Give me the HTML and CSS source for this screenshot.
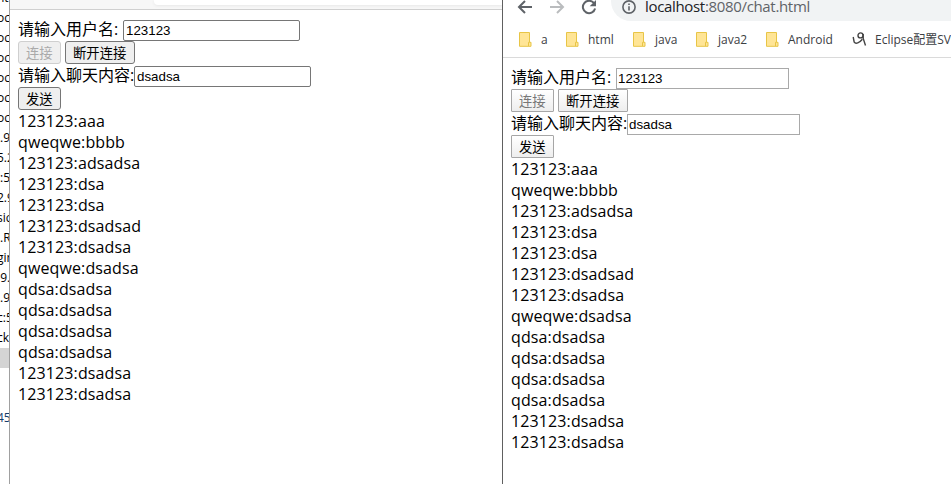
FILE: index.html
```html
<!DOCTYPE html>
<html lang="zh">
<head>
<meta charset="utf-8">
<title>chat</title>
<link rel="stylesheet" href="styles.css">
</head>
<body>
<div class="desktop">
  <aside class="tree">
    <div>nt</div><div>oc</div><div>oc</div><div>oc</div><div>oc</div><div>oc</div><div>oc</div>
    <div class="in">.9</div><div>5.2</div><div class="in">:5</div><div>2.9</div><div>sic</div><div class="in">.R</div><div>gin</div><div>.9.</div><div class="in">.9</div><div>c:5</div><div>cke</div>
    <div class="selected"></div><div></div><div></div><div class="number">45</div>
  </aside>
  <section class="window left">
    <header class="strip"><div class="strip-field"></div></header>
    <main class="page">
      <div class="row"><span class="label">请输入用户名:</span><input class="name" value="123123"></div>
      <div class="row"><button disabled>连接</button><button>断开连接</button></div>
      <div class="row"><span class="label">请输入聊天内容:</span><input value="dsadsa"></div>
      <div class="row"><button>发送</button></div>
      <div class="messages">
        <div>123123:aaa</div><div>qweqwe:bbbb</div><div>123123:adsadsa</div><div>123123:dsa</div><div>123123:dsa</div><div>123123:dsadsad</div><div>123123:dsadsa</div><div>qweqwe:dsadsa</div><div>qdsa:dsadsa</div><div>qdsa:dsadsa</div><div>qdsa:dsadsa</div><div>qdsa:dsadsa</div><div>123123:dsadsa</div><div>123123:dsadsa</div>
      </div>
    </main>
  </section>
  <section class="window right">
    <header class="chrome">
      <div class="toolbar">
        <svg class="nav" viewBox="0 0 16 16"><path d="M15 8H2M8 2L2 8l6 6"/></svg>
        <svg class="nav dim" viewBox="0 0 16 16"><path d="M1 8h13M8 2l6 6-6 6"/></svg>
        <svg class="nav" viewBox="0 0 16 16"><path d="M13 4.2A6.2 6.2 0 1 0 14.1 9.5"/><path class="solid" d="M15 1v6.3H8.7z"/></svg>
        <div class="address">
          <svg class="info" viewBox="0 0 14 14"><circle cx="7" cy="7" r="6.1"/><path d="M7 6.2v4.2M7 3.4v1.6"/></svg>
          <span class="url"><b>localhost</b>:8080/chat.html</span>
        </div>
      </div>
      <nav class="bookmarks">
        <a class="b-a"><svg class="folder" viewBox="0 0 13 15"><path d="M.5.5h10v9.8h1.5v4H.5zM9.5 14v-3.7h1"/></svg><span>a</span></a>
        <a class="b-html"><svg class="folder" viewBox="0 0 13 15"><path d="M.5.5h10v9.8h1.5v4H.5zM9.5 14v-3.7h1"/></svg><span>html</span></a>
        <a class="b-java"><svg class="folder" viewBox="0 0 13 15"><path d="M.5.5h10v9.8h1.5v4H.5zM9.5 14v-3.7h1"/></svg><span>java</span></a>
        <a class="b-java2"><svg class="folder" viewBox="0 0 13 15"><path d="M.5.5h10v9.8h1.5v4H.5zM9.5 14v-3.7h1"/></svg><span>java2</span></a>
        <a class="b-android"><svg class="folder" viewBox="0 0 13 15"><path d="M.5.5h10v9.8h1.5v4H.5zM9.5 14v-3.7h1"/></svg><span>Android</span></a>
        <a class="b-eclipse"><svg class="site" viewBox="0 0 15 15"><path d="M1.200 5l1 5.200c1.600 2.200 5.200.6 8.200-3"/><circle cx="8.500" cy="3.400" r="2.500"/><path d="M11.200 2v4.500l2.300 7"/></svg><span>Eclipse配置SV</span></a>
      </nav>
    </header>
    <main class="page">
      <div class="row"><span class="label">请输入用户名:</span><input class="name" value="123123"></div>
      <div class="row"><button disabled>连接</button><button>断开连接</button></div>
      <div class="row"><span class="label">请输入聊天内容:</span><input value="dsadsa"></div>
      <div class="row"><button>发送</button></div>
      <div class="messages">
        <div>123123:aaa</div><div>qweqwe:bbbb</div><div>123123:adsadsa</div><div>123123:dsa</div><div>123123:dsa</div><div>123123:dsadsad</div><div>123123:dsadsa</div><div>qweqwe:dsadsa</div><div>qdsa:dsadsa</div><div>qdsa:dsadsa</div><div>qdsa:dsadsa</div><div>qdsa:dsadsa</div><div>123123:dsadsa</div><div>123123:dsadsa</div>
      </div>
    </main>
  </section>
</div>
</body>
</html>
```
FILE: styles.css
```css
* { box-sizing: border-box; }
body { margin: 0; background: #fff; color: #000; font-family: "Open Sans", "Noto Sans CJK SC", sans-serif; }
.desktop { display: grid; grid-template-columns: 9px 493px 449px; width: 951px; height: 484px; overflow: hidden; }
.tree { overflow: hidden; margin-top: -12px; font-size: 12px; line-height: 20px; }
.tree div { height: 20px; white-space: nowrap; overflow: hidden; text-indent: -3px; }
.tree .in { text-indent: 0; }
.tree .selected { background: #d4d4d4; }
.tree .number { color: #123c69; }
.window { overflow: hidden; background: #fff; }
.left { border-left: 1px solid #a0a0a0; }
.right { border-left: 1px solid #606060; }
.strip { height: 10px; background: #f7f7f7; border-bottom: 1px solid #d0d0d0; padding-left: 144px; }
.strip-field { height: 5px; background: #fff; border-radius: 0 0 0 4px; box-shadow: 0 1px 3px #e8e8e8; }
.page { padding: 8px 8px 0; }
.row { display: flex; align-items: flex-end; height: 23px; }
.label { width: 116px; font-size: 16px; line-height: 23px; white-space: nowrap; }
.row:first-child .label { width: 105px; }
input { width: 177px; height: 21px; margin: 0; padding: 1px 2px; border: 1px solid #767676; border-radius: 2px; background: #fff; color: #000; font: 13.333px "Liberation Sans", sans-serif; }
button { height: 23px; margin: 0 4px 0 0; padding: 0 7px; border: 1px solid #767676; border-radius: 3px; background: #efefef; color: #000; font: 13.333px/20px "Noto Sans CJK SC", sans-serif; white-space: nowrap; }
button:nth-child(2) { width: 70px; }
button:disabled { border-color: #cfcfcf; color: #aaa; }
.right input { width: 173px; padding: 1px; border: 1px solid #a9a9a9; border-radius: 0; }
.right button { border-color: #a6a6a6; border-radius: 1px; background: linear-gradient(#fff, #eee); }
.right button:disabled { color: #777; }
.messages { padding-top: 1px; font-size: 16px; line-height: 21px; letter-spacing: .12px; }
.chrome { height: 58px; border-bottom: 1px solid #dadada; }
.toolbar { display: flex; height: 21px; padding-left: 14px; }
.nav { flex: none; width: 16px; height: 16px; margin: -1px 16px 0 0; fill: none; stroke: #5f6368; stroke-width: 2; }
.nav .solid { fill: #5f6368; stroke: none; }
.nav.dim { stroke: #babcbe; }
.address { display: flex; flex: 1; height: 21px; margin-left: -2px; padding-left: 11px; background: #f1f3f4; border-radius: 0 0 0 20px; }
.info { width: 14px; height: 14px; fill: none; stroke: #5f6368; stroke-width: 1.6; }
.url { margin-left: 9px; color: #5f6368; font-size: 15px; line-height: 20px; margin-top: -4px; letter-spacing: -.33px; }
.url b { color: #202124; font-weight: 400; }
.bookmarks { display: flex; height: 36px; padding-left: 16px; color: #3c4043; font-size: 12px; }
.bookmarks a { display: flex; flex: none; align-items: center; white-space: nowrap; }
.bookmarks span { margin-left: 9px; }
.bookmarks .b-eclipse span { margin-left: 8px; }
.folder { width: 13px; height: 15px; fill: #ffe596; stroke: #e8c546; }
.b-a { width: 47px; }
.b-html { width: 67px; }
.b-java { width: 63px; }
.b-java2 { width: 70px; }
.b-android { width: 86px; }
.site { width: 15px; height: 15px; fill: none; stroke: #444; stroke-width: 1.4; }
```
